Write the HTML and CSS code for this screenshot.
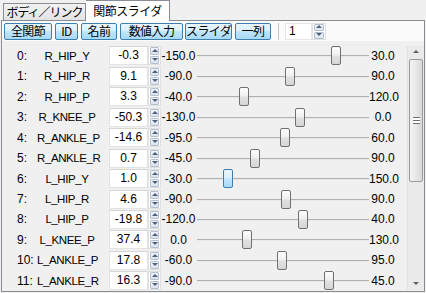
FILE: index.html
```html
<!DOCTYPE html>
<html lang="ja">
<head>
    <meta charset="UTF-8">
    <title>関節スライダ</title>
    <link rel="stylesheet" href="styles.css">
</head>
<body>
    <div class="tabs">
        <div class="tab">ボディ／リンク</div>
        <div class="tab active">関節スライダ</div>
    </div>

    <div class="panel">
        <div class="toolbar">
            <button class="tb b-all">全関節</button>
            <button class="tb b-id">ID</button>
            <button class="tb b-name">名前</button>
            <button class="tb b-num">数値入力</button>
            <button class="tb b-slider">スライダ</button>
            <button class="tb b-col">一列</button>
            <span class="sep"></span>
            <div class="spin cols">
                <span class="spin-text">1</span>
                <span class="spin-btns"><i class="up"></i><i class="down"></i></span>
            </div>
        </div>

        <div class="body">
            <div class="rows">
                <div class="row"><span class="idx">0:</span><span class="name">R_HIP_Y</span><div class="spin"><span class="val">-0.3</span><span class="spin-btns"><i class="up"></i><i class="down"></i></span></div><span class="min">-150.0</span><div class="slider"><div class="track"></div><div class="thumb" style="left: 135px"></div></div><span class="max">30.0</span></div>
                <div class="row"><span class="idx">1:</span><span class="name">R_HIP_R</span><div class="spin"><span class="val">9.1</span><span class="spin-btns"><i class="up"></i><i class="down"></i></span></div><span class="min">-90.0</span><div class="slider"><div class="track"></div><div class="thumb" style="left: 89px"></div></div><span class="max">90.0</span></div>
                <div class="row"><span class="idx">2:</span><span class="name">R_HIP_P</span><div class="spin"><span class="val">3.3</span><span class="spin-btns"><i class="up"></i><i class="down"></i></span></div><span class="min">-40.0</span><div class="slider"><div class="track"></div><div class="thumb" style="left: 43px"></div></div><span class="max">120.0</span></div>
                <div class="row"><span class="idx">3:</span><span class="name">R_KNEE_P</span><div class="spin"><span class="val">-50.3</span><span class="spin-btns"><i class="up"></i><i class="down"></i></span></div><span class="min">-130.0</span><div class="slider"><div class="track"></div><div class="thumb" style="left: 99px"></div></div><span class="max">0.0</span></div>
                <div class="row"><span class="idx">4:</span><span class="name">R_ANKLE_P</span><div class="spin"><span class="val">-14.6</span><span class="spin-btns"><i class="up"></i><i class="down"></i></span></div><span class="min">-95.0</span><div class="slider"><div class="track"></div><div class="thumb" style="left: 84px"></div></div><span class="max">60.0</span></div>
                <div class="row"><span class="idx">5:</span><span class="name">R_ANKLE_R</span><div class="spin"><span class="val">0.7</span><span class="spin-btns"><i class="up"></i><i class="down"></i></span></div><span class="min">-45.0</span><div class="slider"><div class="track"></div><div class="thumb" style="left: 54px"></div></div><span class="max">90.0</span></div>
                <div class="row"><span class="idx">6:</span><span class="name">L_HIP_Y</span><div class="spin"><span class="val">1.0</span><span class="spin-btns"><i class="up"></i><i class="down"></i></span></div><span class="min">-30.0</span><div class="slider"><div class="track"></div><div class="thumb hot" style="left: 27px"></div></div><span class="max">150.0</span></div>
                <div class="row"><span class="idx">7:</span><span class="name">L_HIP_R</span><div class="spin"><span class="val">4.6</span><span class="spin-btns"><i class="up"></i><i class="down"></i></span></div><span class="min">-90.0</span><div class="slider"><div class="track"></div><div class="thumb" style="left: 85px"></div></div><span class="max">90.0</span></div>
                <div class="row"><span class="idx">8:</span><span class="name">L_HIP_P</span><div class="spin"><span class="val">-19.8</span><span class="spin-btns"><i class="up"></i><i class="down"></i></span></div><span class="min">-120.0</span><div class="slider"><div class="track"></div><div class="thumb" style="left: 102px"></div></div><span class="max">40.0</span></div>
                <div class="row"><span class="idx">9:</span><span class="name">L_KNEE_P</span><div class="spin"><span class="val">37.4</span><span class="spin-btns"><i class="up"></i><i class="down"></i></span></div><span class="min">0.0</span><div class="slider"><div class="track"></div><div class="thumb" style="left: 46px"></div></div><span class="max">130.0</span></div>
                <div class="row"><span class="idx">10:</span><span class="name">L_ANKLE_P</span><div class="spin"><span class="val">17.8</span><span class="spin-btns"><i class="up"></i><i class="down"></i></span></div><span class="min">-60.0</span><div class="slider"><div class="track"></div><div class="thumb" style="left: 81px"></div></div><span class="max">95.0</span></div>
                <div class="row"><span class="idx">11:</span><span class="name">L_ANKLE_R</span><div class="spin"><span class="val">16.3</span><span class="spin-btns"><i class="up"></i><i class="down"></i></span></div><span class="min">-90.0</span><div class="slider"><div class="track"></div><div class="thumb" style="left: 128px"></div></div><span class="max">45.0</span></div>
            </div>

            <div class="scrollbar">
                <div class="sb-arrow"><i class="up"></i></div>
                <div class="sb-track">
                    <div class="sb-thumb"><span class="grip"></span></div>
                </div>
                <div class="sb-arrow"><i class="down"></i></div>
            </div>
        </div>
    </div>
</body>
</html>
```

FILE: styles.css
```css
body {
    margin: 0;
    width: 426px;
    height: 293px;
    background: #f0f0f0;
    font-family: "Liberation Sans", "Noto Sans CJK JP", sans-serif;
    font-size: 12px;
    color: #000;
    overflow: hidden;
}

/* tabs */
.tabs {
    display: flex;
    align-items: flex-end;
    height: 20px;
    padding-left: 3px;
}
.tab {
    width: 81px;
    height: 16px;
    line-height: 16px;
    border: 1px solid #898c95;
    border-bottom: none;
    background: linear-gradient(#f2f2f2, #e3e3e3);
    font-family: "Noto Sans CJK JP", sans-serif;
    letter-spacing: -1px;
    text-align: center;
    white-space: nowrap;
}
.tab.active {
    width: 83px;
    height: 20px;
    line-height: 19px;
    background: #fff;
    border-left: none;
    position: relative;
    top: 1px;
    letter-spacing: -0.5px;
}

/* panel */
.panel {
    margin-left: 1px;
    width: 422px;
    height: 270px;
    border: 1px solid #898c95;
    display: flex;
    flex-direction: column;
}
.toolbar {
    display: flex;
    align-items: center;
    gap: 2px;
    height: 20px;
    padding: 1px 2px 0;
    background: #fbfbfb;
}
.tb {
    height: 17px;
    padding: 0;
    border: 1px solid #3c7fb1;
    border-radius: 2px;
    background: linear-gradient(#eaf6fd 0%, #d9f0fc 45%, #bee6fd 50%, #a7d9f5 100%);
    font-family: "Noto Sans CJK JP", sans-serif;
    font-size: 12px;
    line-height: 14px;
    letter-spacing: -0.6px;
    white-space: nowrap;
    color: #000;
}
.b-all { width: 48px; }
.b-id { width: 23px; margin-left: 1px; }
.b-name { width: 36px; margin-left: 1px; }
.b-num { width: 63px; margin-left: 1px; }
.b-slider { width: 47px; }
.b-col { width: 36px; margin-left: 1px; }
.sep {
    width: 1px;
    height: 17px;
    background: #c5c5c5;
    margin: 0 4px 0 5px;
}

/* spin boxes */
.spin {
    display: flex;
    height: 19px;
    box-sizing: border-box;
}
.spin .val,
.spin .spin-text {
    width: 39px;
    box-sizing: border-box;
    border: 1px solid #e3e3e3;
    border-top-color: #d5d5d5;
    background: #fff;
    line-height: 17px;
    text-align: center;
}
.spin-btns {
    display: flex;
    flex-direction: column;
    width: 13px;
    box-sizing: border-box;
    border: 1px solid #e0e0e0;
    background: #fff;
    padding: 0 1px;
    gap: 1px;
}
.spin-btns i {
    flex: 1;
    position: relative;
    background: linear-gradient(#f2f5fa, #dbe3ef);
    border: 1px solid #b4bfd0;
    border-radius: 1px;
}
.spin-btns i::after,
.sb-arrow i::after {
    content: "";
    position: absolute;
    left: 50%;
    top: 50%;
    margin-left: -3px;
    margin-top: -2px;
    border-left: 3px solid transparent;
    border-right: 3px solid transparent;
}
.spin-btns .up::after { border-bottom: 3px solid #4c607f; }
.spin-btns .down::after { border-top: 3px solid #4c607f; }

.cols {
    height: 17px;
}
.cols .spin-text {
    width: 27px;
    text-align: left;
    padding-left: 3px;
    line-height: 15px;
    border-color: #e6e6e6;
}
.cols .spin-btns {
    width: 14px;
}

/* rows */
.body {
    flex: 1;
    display: flex;
    padding-top: 5px;
    background: #f0f0f0;
}
.rows {
    flex: 1;
    padding-left: 15px;
}
.row {
    display: flex;
    align-items: center;
    height: 20.45px;
}
.idx {
    width: 20px;
}
.name {
    width: 60px;
    text-align: center;
    font-size: 11.5px;
    letter-spacing: -0.4px;
}
.row .spin {
    margin-left: 12px;
}
.min {
    width: 35px;
    text-align: center;
}
.max {
    width: 28px;
    text-align: center;
}

/* slider */
.slider {
    position: relative;
    width: 173px;
    height: 19px;
}
.track {
    position: absolute;
    left: 1px;
    right: 0;
    top: 9px;
    height: 1px;
    background: #b0b0b0;
    border-bottom: 1px solid #e8e8e8;
}
.thumb {
    position: absolute;
    top: 0;
    width: 8px;
    height: 17px;
    border: 1px solid #707070;
    border-radius: 2px;
    background: linear-gradient(#fdfdfd 0%, #f0f0f0 45%, #e0e0e0 55%, #d6d6d6 100%);
}
.thumb.hot {
    border-color: #3c7fb1;
    background: linear-gradient(#eaf6fd 0%, #d9f0fc 45%, #bee6fd 55%, #a7d9f5 100%);
}

/* scrollbar */
.scrollbar {
    width: 17px;
    display: flex;
    flex-direction: column;
    background: #eaeaea;
    border-left: 1px solid #e0e0e0;
    box-sizing: border-box;
    margin-bottom: 1px;
}
.sb-arrow {
    height: 13px;
    position: relative;
}
.sb-arrow .up::after { border-bottom: 3px solid #606060; }
.sb-arrow .down::after { border-top: 3px solid #606060; }
.sb-track {
    flex: 1;
}
.sb-thumb {
    margin: 0 1px;
    height: 121px;
    border: 1px solid #9a9a9a;
    border-radius: 2px;
    background: linear-gradient(90deg, #f4f4f4, #e8e8e8 50%, #d8d8d8);
    display: flex;
    align-items: center;
    justify-content: center;
}
.grip {
    width: 7px;
    height: 5px;
    border-top: 1px solid #707070;
    border-bottom: 1px solid #707070;
    background: linear-gradient(#fff 0, #fff 2px, #707070 2px, #707070 3px, #fff 3px);
}
```
